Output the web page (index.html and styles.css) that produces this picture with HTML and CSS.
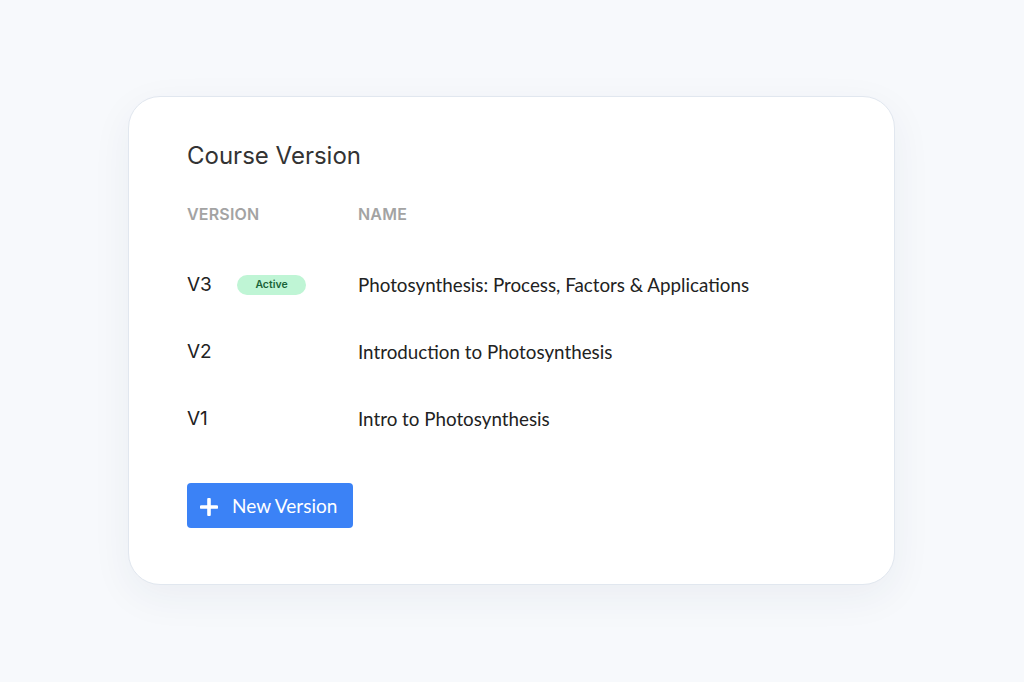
FILE: index.html
```html
<!DOCTYPE html>
<html lang="en">
<head>
<meta charset="utf-8">
<title>Course Version</title>
<link rel="stylesheet" href="styles.css">
</head>
<body>
<main class="page">
  <section class="card">
    <h1 class="title">Course Version</h1>
    <div class="head">
      <div class="col-version">VERSION</div>
      <div class="col-name">NAME</div>
    </div>
    <div class="row">
      <div class="col-version"><span class="ver">V3</span><span class="badge">Active</span></div>
      <div class="col-name name">Photosynthesis: Process, Factors &amp; Applications</div>
    </div>
    <div class="row">
      <div class="col-version"><span class="ver">V2</span></div>
      <div class="col-name name">Introduction to Photosynthesis</div>
    </div>
    <div class="row">
      <div class="col-version"><span class="ver">V1</span></div>
      <div class="col-name name">Intro to Photosynthesis</div>
    </div>
    <button class="btn" type="button">
      <svg class="plus" width="18" height="18" viewBox="0 0 18 18" aria-hidden="true">
        <path d="M9 1.5V16.5M1.5 9H16.5" stroke="#fff" stroke-width="3.6" stroke-linecap="round"/>
      </svg>
      <span>New Version</span>
    </button>
  </section>
</main>
</body>
</html>
```
FILE: styles.css
```css
* { box-sizing: border-box; }
html, body { margin: 0; padding: 0; }
body {
  background: #f7f9fc;
  font-family: "Inter", "Liberation Sans", sans-serif;
  width: 1024px;
  height: 682px;
  overflow: hidden;
}
.page {
  height: 682px;
  padding: 96px 0 0 128px;
  display: flex;
  align-items: flex-start;
  justify-content: flex-start;
}
.card {
  width: 767px;
  height: 489px;
  background: #fff;
  border: 1px solid #e1e7ef;
  border-radius: 32px;
  box-shadow: 0 12px 40px rgba(30, 50, 90, 0.06);
  padding: 43px 58px 56px 58px;
  display: flex;
  flex-direction: column;
  align-items: flex-start;
}
.title {
  margin: 0;
  font-size: 24px;
  line-height: 32px;
  font-weight: 400;
  color: #333;
  height: 32px;
}
.head {
  margin-top: 30px;
  display: flex;
  height: 24px;
  line-height: 24px;
  font-size: 16px;
  font-weight: 600;
  color: #a3a3a3;
  letter-spacing: 0.2px;
}
.col-version {
  width: 171px;
  display: flex;
  align-items: center;
}
.head + .row { margin-top: 25px; }
.row {
  display: flex;
  align-items: center;
  height: 67px;
  width: 100%;
}
.ver {
  font-size: 19px;
  color: #222;
  width: 50px;
}
.badge {
  display: inline-block;
  height: 20px;
  line-height: 20px;
  width: 69px;
  text-align: center;
  border-radius: 10px;
  background: #bff5d5;
  color: #1a6338;
  font-size: 10.5px;
  font-weight: 600;
}
.name {
  font-family: "Lato", "Liberation Sans", sans-serif;
  font-size: 18.8px;
  color: #222;
}
.btn {
  margin-top: 31px;
  height: 45px;
  width: 166px;
  border: none;
  border-radius: 4px;
  background: #3b82f6;
  color: #fff;
  display: flex;
  align-items: center;
  padding: 0 0 0 13px;
  gap: 14px;
  font-family: "Lato", "Liberation Sans", sans-serif;
  font-size: 19px;
  cursor: pointer;
}
.plus { display: block; margin-top: 2px; }
```
